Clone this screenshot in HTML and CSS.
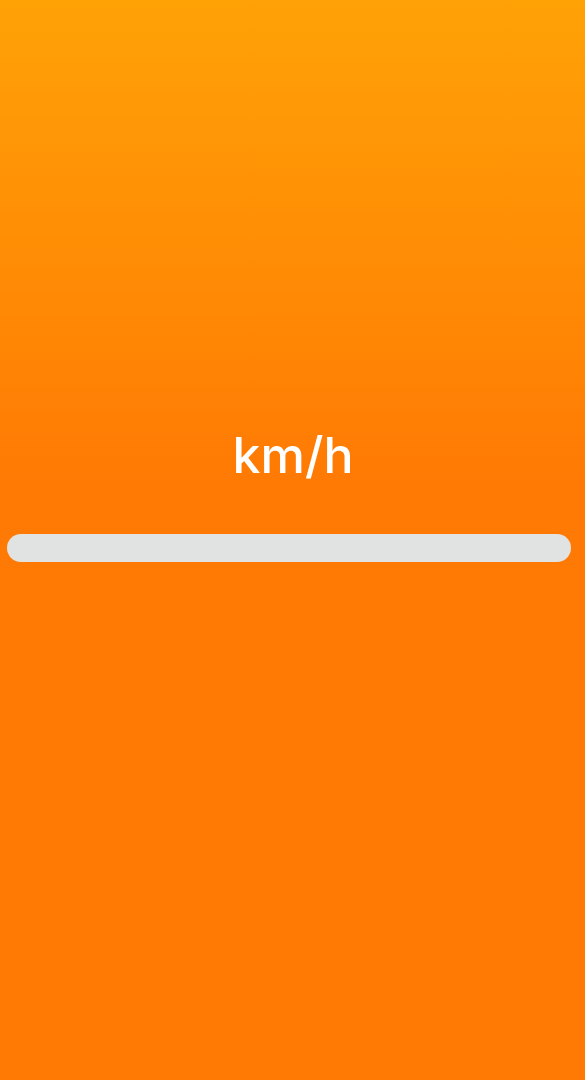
FILE: index.html
```html
<!DOCTYPE html>
<html>
<head>
<meta charset="utf-8">
<link rel="stylesheet" href="styles.css">
</head>
<body>
<main class="screen">
  <div class="unit">km/h</div>
  <div class="track"></div>
</main>
</body>
</html>
```
FILE: styles.css
```css
html, body {
  margin: 0;
  padding: 0;
  height: 100%;
}
body {
  background: linear-gradient(to bottom, #ffa206 0px, #ff7a04 480px, #ff7a04 100%);
  font-family: Inter, "Liberation Sans", Arial, sans-serif;
}
.screen {
  height: 1080px;
  display: flex;
  flex-direction: column;
  align-items: center;
  padding-top: 425px;
  box-sizing: border-box;
}
.unit {
  color: #ffffff;
  font-size: 50px;
  font-weight: 500;
  line-height: 60px;
  padding-left: 1px;
}
.track {
  margin-top: 49px;
  align-self: stretch;
  margin-left: 7px;
  margin-right: 14px;
  height: 28px;
  border-radius: 14px;
  background: #e1e3e2;
}
```
